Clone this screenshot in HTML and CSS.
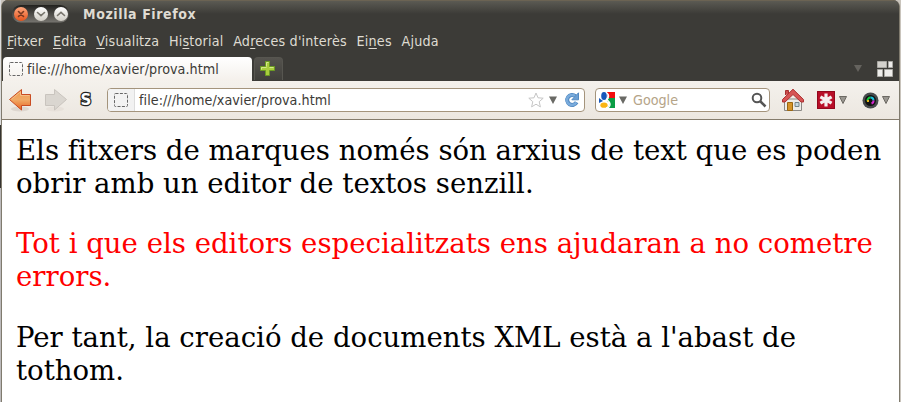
FILE: index.html
```html
<!DOCTYPE html>
<html lang="ca">
<head>
<meta charset="utf-8">
<title>Mozilla Firefox</title>
<link rel="stylesheet" href="styles.css">
</head>
<body>
<div class="window">
  <header class="titlebar">
    <div class="controls">
      <svg width="60" height="20" viewBox="0 0 60 20">
        <defs>
          <linearGradient id="pill" x2="0" y2="1"><stop stop-color="#22211e"/><stop offset="1" stop-color="#777570"/></linearGradient>
          <linearGradient id="red" x2="0" y2="1"><stop stop-color="#ffa77d"/><stop offset="1" stop-color="#e4531c"/></linearGradient>
          <linearGradient id="white" x2="0" y2="1"><stop stop-color="#fff"/><stop offset="1" stop-color="#d0cdc5"/></linearGradient>
        </defs>
        <rect x="1" y="1" width="57" height="17.5" rx="8.7" fill="url(#pill)"/>
        <circle cx="10" cy="10" r="7" fill="url(#red)"/>
        <circle cx="30" cy="10" r="7" fill="url(#white)"/>
        <circle cx="50" cy="10" r="7" fill="url(#white)"/>
        <g fill="none" stroke-width="1.6" stroke-linecap="round">
          <path d="M7.5 7.5l5 5m0-5l-5 5" stroke="#783820"/>
          <path d="M26.5 8.5l3.5 3.2 3.5-3.2M46.5 11.5l3.5-3.2 3.5 3.2" stroke="#77746c"/>
        </g>
      </svg>
    </div>
    <span class="title">Mozilla Firefox</span>
  </header>
  <nav class="menu">
    <span><u>F</u>itxer</span><span><u>E</u>dita</span><span><u>V</u>isualitza</span><span>Hi<u>s</u>torial</span><span>Ad<u>r</u>eces d'interès</span><span>Ei<u>n</u>es</span><span>A<u>j</u>uda</span>
  </nav>
  <div class="tabs">
    <div class="tab">
      <svg width="14" height="14" viewBox="0 0 14 14"><rect x=".5" y=".5" width="13" height="13" rx="1" fill="none" stroke="#666" stroke-dasharray="3 1.400"/></svg>
      <span class="url">file:///home/xavier/prova.html</span>
    </div>
    <div class="newtab">
      <svg width="16" height="16" viewBox="0 0 16 16"><path d="M5.500.5h4v5h5v4h-5v5h-4v-5h-5v-4h5z" fill="#a9cd3d" stroke="#6b9a22"/><path d="M6.500 5.500v-4h2M1.500 8.500v-2h5M9.500 6.500h4" fill="none" stroke="#d5e98c"/></svg>
    </div>
    <div class="tabtools">
      <svg width="8" height="7" viewBox="0 0 8 7"><path d="M0 0h8L4 7z" fill="#65635e"/></svg>
      <svg width="16" height="16" viewBox="0 0 16 16"><g fill="#d3d1cc" stroke="#aaa9a4"><path d="M.5.5h9v6h-9z"/><path d="M11.500.5h4v6h-4zM.5 8.500h5v7h-5zM7.500 8.500h8v7h-8z" fill="#eeedeb"/></g></svg>
    </div>
  </div>
  <div class="toolbar">
    <svg class="back" width="24" height="24" viewBox="0 0 24 24">
      <defs><linearGradient id="orange" x2="0" y2="1"><stop stop-color="#ee9a4f"/><stop offset=".5" stop-color="#f0aa66"/><stop offset="1" stop-color="#e96321"/></linearGradient></defs>
      <ellipse cx="12" cy="21" rx="9" ry="2.500" fill="#ddd6cf"/><path d="M1.500 11.500L13.500 1.500v5h9v11h-9v4.500z" fill="url(#orange)" stroke="#c94c22"/><path d="M3.500 11.200L12.500 3.800V7.500h9" fill="none" stroke="#f5bd85"/>
    </svg>
    <svg class="forward" width="24" height="24" viewBox="0 0 24 24"><ellipse cx="11" cy="21" rx="9" ry="2.500" fill="#e7e1da"/><path d="M22.500 11.500L10.500 1.500v5h-9v11h9v4.500z" fill="#dad6d0" stroke="#c9c4be"/></svg>
    <span class="script">S</span>
    <div class="address">
      <div class="identity"><svg width="14" height="14" viewBox="0 0 14 14"><rect x=".5" y=".5" width="13" height="13" rx="1" fill="none" stroke="#666" stroke-dasharray="3 1.400"/></svg></div>
      <span class="url">file:///home/xavier/prova.html</span>
      <svg class="star" width="16" height="16" viewBox="0 0 16 16"><path d="M8 1l2 4.800 5.200.4-4 3.500 1.200 5.200L8 12.200l-4.400 2.700 1.200-5.200-4-3.500L6 5.800z" fill="#fff" stroke="#c5c5c5"/></svg>
      <svg class="drop" width="8" height="8" viewBox="0 0 8 8"><path d="M0 .5h8L4 8z" fill="#696965"/></svg>
      <svg class="reload" width="16" height="16" viewBox="0 0 16 16"><path d="M12.600 10.300A5 5 0 1 1 11.300 4" fill="none" stroke="#4f86be" stroke-width="4"/><path d="M12.300 10.300A5 5 0 1 1 11 4" fill="none" stroke="#79abdc" stroke-width="2.500"/><path d="M14.500.8v7H7.800z" fill="#6b9fd4" stroke="#5389c0"/></svg>
    </div>
    <div class="search">
      <svg width="16" height="16" viewBox="0 0 16 16"><path d="M0 0h16v16H0z" fill="#fff"/><path d="M8 0h8v6H9z" fill="#f20d0d"/><path d="M10 6h6v10H8c4-3 3-6 0-7z" fill="#0a9d45"/><ellipse cx="5" cy="4" rx="2.800" ry="4" fill="#1757bb"/><path d="M0 6l4 3-4 2z" fill="#1757bb"/><ellipse cx="5" cy="13.200" rx="3.600" ry="2.600" fill="#fab515"/><path d="M8 1c3 3 1 5 0 6s3 2 3 5-2 4-4 4" fill="none" stroke="#fff" stroke-width="1.500"/></svg>
      <svg class="sdrop" width="8" height="8" viewBox="0 0 8 8"><path d="M0 .5h8L4 8z" fill="#696965"/></svg>
      <span class="hint">Google</span>
      <svg class="magnify" width="16" height="16" viewBox="0 0 16 16"><circle cx="6" cy="6" r="4.300" fill="none" stroke="#555" stroke-width="2"/><path d="M9 9l5.500 5.500" stroke="#555" stroke-width="2.600"/></svg>
    </div>
    <svg class="home" width="24" height="24" viewBox="0 0 24 24"><path d="M3.500 11h17v11.500h-17z" fill="#eeece9" stroke="#8a8885"/><path d="M4.500 7V2.500h3V6" fill="#c94b4b" stroke="#a63030"/><path d="M12 1.200L1.500 11.500v2.500H4l8-7.500 8 7.500h2.500v-2.500z" fill="#d65454" stroke="#ad3131"/><path d="M6.500 14.500h5v8h-5z" fill="#d69429" stroke="#996612"/><path d="M14 14.500h4v4h-4z" fill="#c7d7df" stroke="#75858c"/></svg>
    <svg class="addon" width="18" height="18" viewBox="0 0 18 18"><path d="M0 0h18v18H0z" fill="#b80e28"/><path d="M.5.5h17v17H.5z" fill="none" stroke="#91081d"/><path d="M9 2.500v13M3.400 5.800l11.200 6.400M14.600 5.800L3.400 12.200" stroke="#f5eeee" stroke-width="3.200"/></svg>
    <svg class="drop2" width="8" height="8" viewBox="0 0 8 8"><path d="M.5.5h7L4 7.500z" fill="#999690" stroke="#6c6963"/></svg>
    <svg class="lens" width="17" height="17" viewBox="0 0 17 17"><circle cx="8.500" cy="8.500" r="8" fill="#484b4d"/><circle cx="8.500" cy="8.500" r="5.500" fill="#111"/><g fill="none" stroke-width="2"><path d="M5.500 9a3 3 0 0 1 3-3.500" stroke="#13cb3c"/><path d="M8.500 5.500a3 3 0 0 1 3 3" stroke="#18bedb"/><path d="M11.500 8.500a3 3 0 0 1-2 3" stroke="#d527cf"/></g><path d="M5 8h2v2H5z" fill="#e5b51a"/></svg>
    <svg class="drop3" width="8" height="8" viewBox="0 0 8 8"><path d="M.5.5h7L4 7.500z" fill="#999690" stroke="#6c6963"/></svg>
  </div>
  <main class="page">
    <p>Els fitxers de marques només són arxius de text que es poden obrir amb un editor de textos senzill.</p>
    <p class="warning">Tot i que els editors especialitzats ens ajudaran a no cometre errors.</p>
    <p>Per tant, la creació de documents XML està a l'abast de tothom.</p>
  </main>
</div>
</body>
</html>
```
FILE: styles.css
```css
* { box-sizing: border-box; }
body { margin: 0; height: 402px; overflow: hidden; padding: 0 0 0 1px; background: linear-gradient(#ddd 0 125px, #35332f 125px 188px, #bcbabb 188px) 0 0 / 1px 100% no-repeat, #c9c4bc; font: 14.2px "DejaVu Sans Condensed", "DejaVu Sans", sans-serif; font-stretch: condensed; }
svg { display: block; flex: none; }
.window { width: 899px; height: 402px; border: solid #807b6e; border-width: 0 1px; border-radius: 7px 7px 0 0; overflow: hidden; background: #3c3b37; }
.titlebar { height: 28px; display: flex; padding: 4px 0 0 9px; background: linear-gradient(#6b6353 0 1px, #5b5a53 1px, #3c3b37 14px); }
.controls { width: 72px; }
.title { color: #dfdbd2; font-size: 14px; font-weight: bold; line-height: 20px; letter-spacing: .6px; white-space: nowrap; }
.menu { height: 29px; padding: 3px 0 0 5px; display: flex; gap: 9.8px; color: #dfdbd2; line-height: 21px; letter-spacing: .18px; white-space: nowrap; }
.menu u { text-underline-offset: 2px; }
.tabs { height: 24px; display: flex; }
.tab { width: 249px; margin-left: 1px; padding: 0 6px; display: flex; align-items: center; gap: 4px; border-radius: 4px 4px 0 0; background: linear-gradient(#fff, #f4f0eb); }
.url { color: #3c3b37; white-space: nowrap; letter-spacing: .05px; }
.newtab { width: 29px; height: 23px; margin-left: 2px; padding: 3px 5px; border: solid #575650; border-width: 1px 1px 0; border-radius: 4px 4px 0 0; background: linear-gradient(#55534e, #403f3b); }
.tabtools { margin-left: auto; margin-right: 6px; display: flex; gap: 15px; padding-top: 4px; }
.tabtools svg:first-child { margin-top: 4px; }
.toolbar { height: 39px; padding-left: 6px; display: flex; align-items: center; background: linear-gradient(#f4f1ec, #ece7e0); border-bottom: 1px solid #857c6c; }
.forward { margin-left: 12px; }
.script { width: 14px; margin-left: 11px; text-align: center; font: bold 15px "DejaVu Sans", sans-serif; color: #fff; -webkit-text-stroke: 2.4px #222; paint-order: stroke fill; }
.address { width: 478px; height: 24px; margin-left: 14px; display: flex; align-items: center; border: 1px solid #a4947c; border-radius: 4px; background: #fff; overflow: hidden; }
.identity { width: 27px; height: 22px; padding: 4px 6px; border-right: 1px solid #ddd; background: #f2f2f2; flex: none; }
.address .url { margin-left: 4px; }
.star { margin-left: auto; }
.drop { margin-left: 5px; }
.reload { margin: 0 4px 0 7px; }
.search { width: 175px; height: 24px; margin-left: 10px; padding-left: 3px; display: flex; align-items: center; border: 1px solid #a4947c; border-radius: 4px; background: #fff; }
.sdrop { margin-left: 4px; }
.hint { margin-left: 6px; color: #b5a488; }
.magnify { margin: 0 2px 0 auto; }
.home { margin-left: 11px; }
.addon { margin-left: 12px; }
.drop2 { margin-left: 4px; }
.lens { margin-left: 15px; }
.drop3 { margin-left: 3px; }
.page { height: 282px; padding: 14px 14px 0; background: #fff; color: #000; font: 27.56px/33px "DejaVu Serif", serif; }
.page p { margin: 0 0 28px; }
.page p:first-child { margin-bottom: 27px; }
.page .warning { color: #f00; }
```
